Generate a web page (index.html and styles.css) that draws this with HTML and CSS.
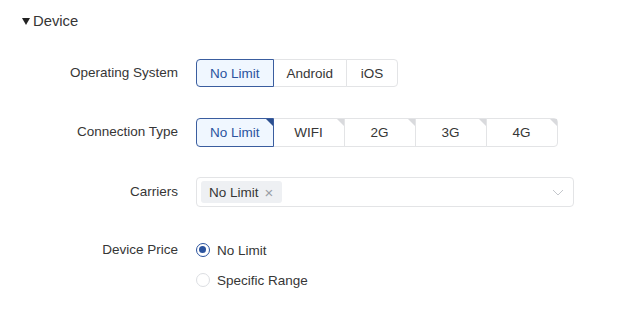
FILE: index.html
```html
<!DOCTYPE html>
<html lang="en">
<head>
  <meta charset="UTF-8">
  <title>Device targeting</title>
  <link rel="stylesheet" href="styles.css">
</head>
<body>
  <div class="section">
    <div class="section-title"><span class="caret"></span>Device</div>

    <div class="form">
      <div class="form-row">
        <div class="form-label">Operating System</div>
        <div class="seg-group">
          <button class="seg-btn active">No Limit</button>
          <button class="seg-btn">Android</button>
          <button class="seg-btn">iOS</button>
        </div>
      </div>

      <div class="form-row">
        <div class="form-label">Connection Type</div>
        <div class="seg-group wide">
          <button class="seg-btn active corner">No Limit</button>
          <button class="seg-btn corner">WIFI</button>
          <button class="seg-btn corner">2G</button>
          <button class="seg-btn corner">3G</button>
          <button class="seg-btn corner">4G</button>
        </div>
      </div>

      <div class="form-row carriers">
        <div class="form-label tall">Carriers</div>
        <div class="select">
          <span class="tag">No Limit <span class="tag-close">&#215;</span></span>
          <svg class="chevron" width="12" height="7" viewBox="0 0 12 7">
            <path d="M1 1l5 5 5-5" fill="none" stroke="#c4c7cc" stroke-width="1"/>
          </svg>
        </div>
      </div>

      <div class="form-row">
        <div class="form-label tall">Device Price</div>
        <div class="radio-group">
          <label class="radio checked"><span class="radio-dot"></span>No Limit</label>
          <label class="radio"><span class="radio-dot"></span>Specific Range</label>
        </div>
      </div>
    </div>
  </div>
</body>
</html>
```

FILE: styles.css
```css
body {
  margin: 0;
  font-family: "Liberation Sans", Arial, sans-serif;
  color: #363636;
  background: #fff;
}
.section {
  padding: 11px 0 0 22px;
}
.section-title {
  display: flex;
  align-items: center;
  font-size: 14.8px;
  line-height: 20px;
}
.caret {
  width: 0;
  height: 0;
  border-left: 4.5px solid transparent;
  border-right: 4.5px solid transparent;
  border-top: 7px solid #222;
  margin-right: 3px;
}
.form {
  margin-top: 28px;
  display: flex;
  flex-direction: column;
  gap: 31px;
}
.form-row {
  display: flex;
  align-items: flex-start;
}
.form-row.carriers {
  margin-top: -1px;
  margin-bottom: -3px;
}
.form-label {
  width: 156px;
  text-align: right;
  font-size: 13.5px;
  line-height: 28px;
  margin-right: 18px;
}
.form-label.tall {
  line-height: 30px;
}
.seg-group {
  display: flex;
}
.seg-btn {
  position: relative;
  height: 28px;
  min-width: 52px;
  padding: 0 13px;
  margin-left: -1px;
  font-family: inherit;
  font-size: 13.5px;
  color: #363636;
  background: #fff;
  border: 1px solid #e3e4e6;
  border-radius: 0;
  cursor: pointer;
}
.seg-btn:first-child {
  margin-left: 0;
  border-radius: 4px 0 0 4px;
}
.seg-btn:last-child {
  border-radius: 0 4px 4px 0;
}
.wide .seg-btn {
  min-width: 72px;
  height: 29px;
}
.seg-btn.active {
  z-index: 1;
  color: #2b539e;
  background: #f0f7ff;
  border-color: #3a5d9f;
}
.seg-btn.corner::after {
  content: "";
  position: absolute;
  top: 0;
  right: 0;
  border-top: 7px solid #d9dadd;
  border-left: 7px solid transparent;
}
.seg-btn.active.corner::after {
  border-top-color: #2b4f8f;
}
.select {
  width: 378px;
  height: 30px;
  box-sizing: border-box;
  display: flex;
  align-items: center;
  justify-content: space-between;
  padding: 0 9px 0 4px;
  border: 1px solid #e3e4e6;
  border-radius: 4px;
}
.tag {
  display: flex;
  align-items: center;
  height: 22px;
  padding: 0 9px 0 8px;
  background: #eef0f3;
  border-radius: 3px;
  font-size: 13.5px;
}
.tag-close {
  margin-left: 6px;
  font-size: 15px;
  color: #9a9ea6;
}
.radio-group {
  display: flex;
  flex-direction: column;
}
.radio {
  display: flex;
  align-items: center;
  height: 30px;
  font-size: 13.5px;
}
.radio-dot {
  width: 14px;
  height: 14px;
  box-sizing: border-box;
  border: 1px solid #dcdee2;
  border-radius: 50%;
  margin-right: 7px;
  position: relative;
}
.radio.checked .radio-dot {
  border: 1.5px solid #2b539e;
}
.radio.checked .radio-dot::after {
  content: "";
  position: absolute;
  top: 2px;
  left: 2px;
  width: 7px;
  height: 7px;
  border-radius: 50%;
  background: #2b539e;
}
```
